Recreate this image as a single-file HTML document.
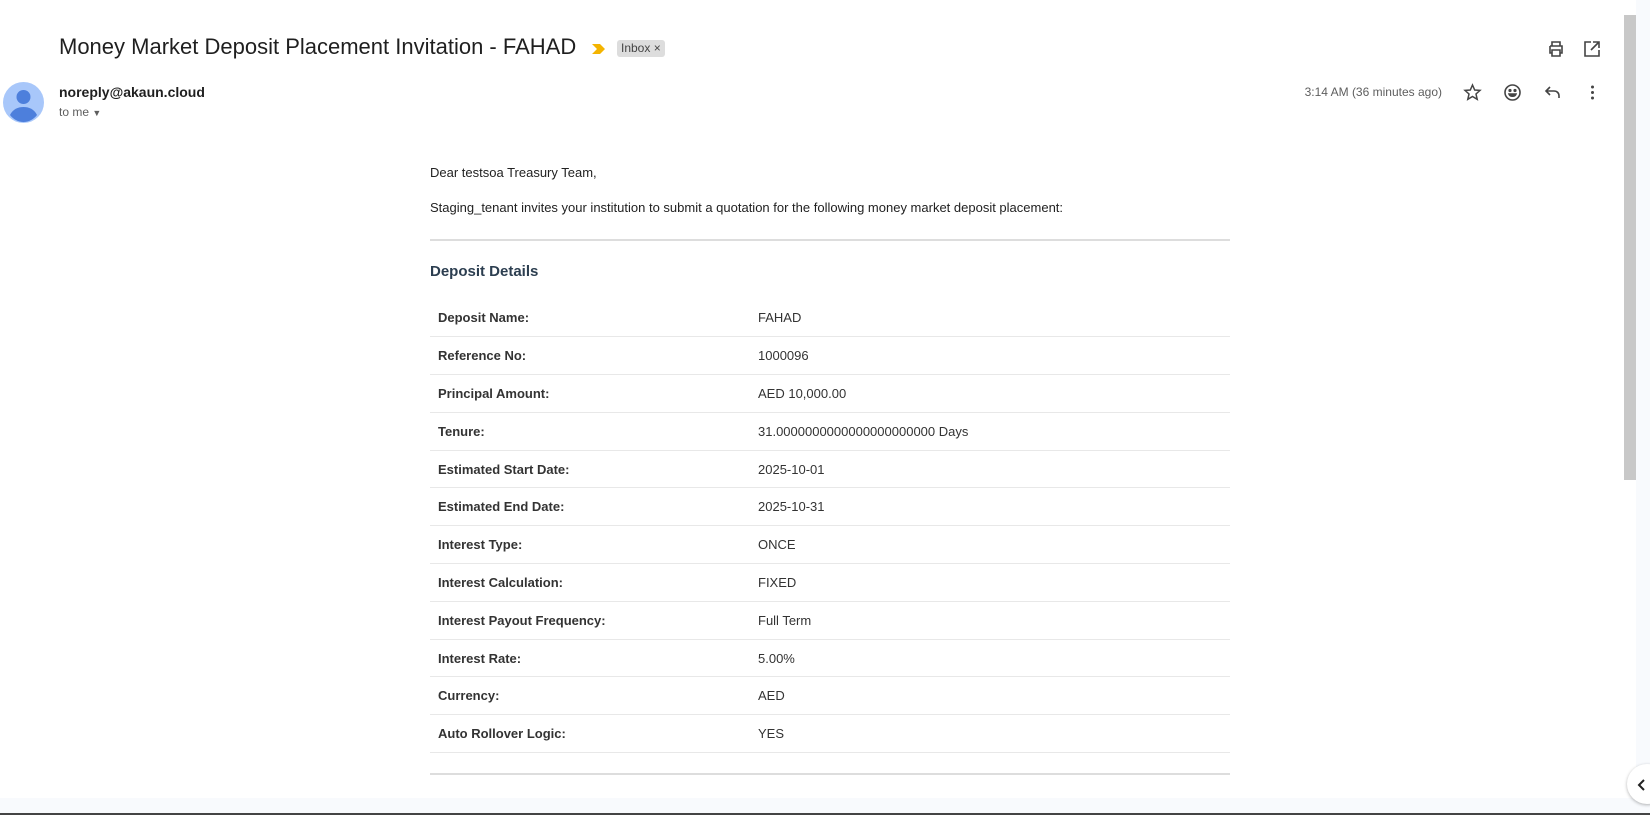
<!DOCTYPE html>
<html><head><style>
*{margin:0;padding:0;box-sizing:border-box}
body{width:1650px;height:815px;overflow:hidden;background:#fff;font-family:"Liberation Sans",Arial,sans-serif;position:relative;color:#222}
.abs{position:absolute}
.title{left:59px;top:34px;font-size:22px;color:#1f1f1f;white-space:nowrap}
.badge{left:617px;top:40px;background:#ddd;border-radius:3px;font-size:12px;color:#444;padding:1px 4px;height:17px;line-height:15px}
.sender{left:59px;top:84px;font-size:14px;font-weight:bold;color:#1f1f1f}
.tome{left:59px;top:105px;font-size:12px;color:#5e5e5e}
.time{right:208px;top:85px;font-size:12px;color:#5e5e5e}
.body{left:430px;top:0;width:800px;font-size:13px;color:#222}
table{border-collapse:collapse;width:800px}
td{height:37.8px;border-bottom:1px solid #e8e8e8;font-size:13px;padding:0 8px;color:#333}
td.l{font-weight:bold;width:320px}
</style></head><body>
<div class="abs title">Money Market Deposit Placement Invitation - FAHAD</div>
<svg class="abs" style="left:591px;top:42px" width="16" height="14"><path d="M1 2h8l5 5-5 5H1l5-5z" fill="#f4b400"/></svg>
<div class="abs badge">Inbox ×</div>
<svg class="abs" style="left:3px;top:82px" width="41" height="41"><circle cx="20.5" cy="20.5" r="20.5" fill="#a8c7fa"/><circle cx="20.5" cy="15" r="7" fill="#4d7fdc"/><path d="M7 33c3-6 8-8 13.5-8s10.5 2 13.5 8c-3 4-8 7-13.5 7S10 37 7 33z" fill="#4d7fdc"/></svg>
<div class="abs sender">noreply@akaun.cloud</div>
<div class="abs tome">to me <span style="font-size:9px">▼</span></div>
<div class="abs time">3:14 AM (36 minutes ago)</div>
<svg class="abs" style="left:1547px;top:40px" width="18" height="18" fill="none" stroke="#444" stroke-width="1.6"><path d="M5 6V2h8v4M3 6h12v7h-2M5 13H3V6M5 10h8v6H5z"/></svg>
<svg class="abs" style="left:1583px;top:40px" width="18" height="18" fill="none" stroke="#444" stroke-width="1.6"><path d="M8 2H2v14h14v-6M10 2h6v6M16 2L8 10"/></svg>
<svg class="abs" style="left:1463px;top:83px" width="19" height="19" fill="none" stroke="#444" stroke-width="1.5"><path d="M9.5 2l2.2 5 5.3.4-4 3.6 1.2 5.3-4.7-2.8-4.7 2.8 1.2-5.3-4-3.6 5.3-.4z"/></svg>
<svg class="abs" style="left:1503px;top:83px" width="19" height="19" fill="none" stroke="#444" stroke-width="1.6"><circle cx="9.5" cy="9.5" r="7.5"/><circle cx="7" cy="7.5" r=".8" fill="#444"/><circle cx="12" cy="7.5" r=".8" fill="#444"/><path d="M6 11h7c-1 3-6 3-7 0z" fill="#444"/></svg>
<svg class="abs" style="left:1543px;top:83px" width="19" height="19" fill="none" stroke="#444" stroke-width="1.6"><path d="M7 4L3 8l4 4M3 8h8c3 0 5 2 5 5v2"/></svg>
<svg class="abs" style="left:1583px;top:83px" width="19" height="19" fill="#444"><circle cx="9.5" cy="4" r="1.5"/><circle cx="9.5" cy="9.5" r="1.5"/><circle cx="9.5" cy="15" r="1.5"/></svg>
<div class="abs body">
<div style="position:absolute;top:165px">Dear testsoa Treasury Team,</div>
<div style="position:absolute;top:200px;white-space:nowrap">Staging_tenant invites your institution to submit a quotation for the following money market deposit placement:</div>
<div style="position:absolute;top:239px;width:800px;height:2px;background:#ddd"></div>
<div style="position:absolute;top:263px;font-size:15px;font-weight:bold;color:#2c3e50">Deposit Details</div>
<table style="position:absolute;top:299px">
<tr><td class="l">Deposit Name:</td><td>FAHAD</td></tr>
<tr><td class="l">Reference No:</td><td>1000096</td></tr>
<tr><td class="l">Principal Amount:</td><td>AED 10,000.00</td></tr>
<tr><td class="l">Tenure:</td><td>31.0000000000000000000000 Days</td></tr>
<tr><td class="l">Estimated Start Date:</td><td>2025-10-01</td></tr>
<tr><td class="l">Estimated End Date:</td><td>2025-10-31</td></tr>
<tr><td class="l">Interest Type:</td><td>ONCE</td></tr>
<tr><td class="l">Interest Calculation:</td><td>FIXED</td></tr>
<tr><td class="l">Interest Payout Frequency:</td><td>Full Term</td></tr>
<tr><td class="l">Interest Rate:</td><td>5.00%</td></tr>
<tr><td class="l">Currency:</td><td>AED</td></tr>
<tr><td class="l">Auto Rollover Logic:</td><td>YES</td></tr>
</table>
<div style="position:absolute;top:773px;width:800px;height:2px;background:#ddd"></div>
</div>
<div class="abs" style="left:1636px;top:0;width:14px;height:815px;background:#f8fafd"></div>
<div class="abs" style="left:1624px;top:15px;width:12px;height:465px;background:#c8c8c8"></div>
<div class="abs" style="left:0;top:798px;width:1650px;height:15px;background:#f8fafd"></div>
<div class="abs" style="left:0;top:813px;width:1650px;height:2px;background:#444"></div>
<div class="abs" style="left:1627px;top:764px;width:40px;height:40px;border-radius:50%;background:#fff;box-shadow:0 1px 3px rgba(0,0,0,.3)"></div>
<svg class="abs" style="left:1636px;top:778px" width="12" height="14" fill="none" stroke="#222" stroke-width="2"><path d="M8 2L3 7l5 5"/></svg>
</body></html>
